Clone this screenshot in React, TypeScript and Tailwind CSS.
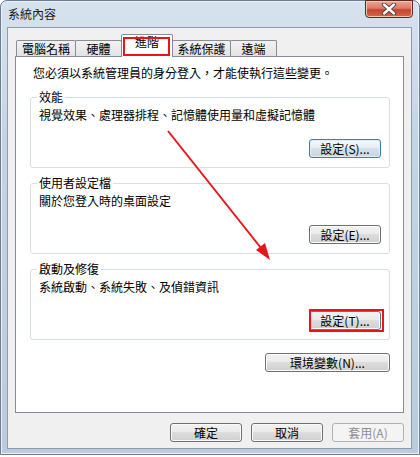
import React from "react";

type BtnVariant = "normal" | "focus" | "disabled";

const btnStyles: Record<BtnVariant, string> = {
  normal:
    "border-[#707070] bg-[linear-gradient(#f2f2f2_0%,#ebebeb_45%,#dddddd_50%,#cfcfcf_100%)] shadow-[inset_0_0_0_1px_#fbfbfb] text-black",
  focus:
    "border-[#3c7fb1] bg-[linear-gradient(#f4f9fc_0%,#e6eef4_45%,#d6e0e8_50%,#c9d6e0_100%)] shadow-[inset_0_0_0_1px_#d8eefb] text-black",
  disabled: "border-[#adb2b5] bg-[#f4f4f4] text-[#8d8d8d]",
};

const WinButton: React.FC<{
  children: React.ReactNode;
  variant?: BtnVariant;
  className?: string;
}> = ({ children, variant = "normal", className = "" }) => {
  return (
    <button
      className={`h-[19px] rounded-[3px] border text-[12px] leading-[15px] flex items-center justify-center ${btnStyles[variant]} ${className}`}
    >
      {children}
    </button>
  );
};

const Group: React.FC<{
  title: string;
  desc: string;
  button: string;
  variant?: BtnVariant;
}> = ({ title, desc, button, variant = "normal" }) => {
  return (
    <fieldset className="h-[79px] border border-[#d5dfe5] rounded-[3px] pl-[6px] pr-[8px]">
      <legend className="px-[2px] leading-[16px] text-black">{title}</legend>
      <p className="pt-[2px] pl-[2px] leading-[16px]">{desc}</p>
      <div className="flex justify-end mt-[16px]">
        <WinButton variant={variant} className="w-[72px]">
          {button}
        </WinButton>
      </div>
    </fieldset>
  );
};

const tabs = [
  { label: "電腦名稱", w: "w-[60px]" },
  { label: "硬體", w: "w-[47px]" },
  { label: "進階", w: "w-[52px]", active: true },
  { label: "系統保護", w: "w-[59px]" },
  { label: "遠端", w: "w-[47px]" },
];

export default function App() {
  return (
    <div className="relative w-[420px] h-[457px] bg-white font-[family-name:'Noto_Sans_CJK_TC',sans-serif] text-[12px] text-black">
      <div className="w-[420px] h-[455px] rounded-t-[7px] border border-[#6b7d93] bg-[linear-gradient(180deg,#d6e2ee_0%,#c5d4e5_30%,#bccbdc_100%)] shadow-[inset_0_0_0_1px_#e9f0f8] flex flex-col">
        {/* title bar */}
        <div className="h-[27px] flex justify-between items-start pl-[7px] pr-[6px]">
          <span className="pt-[5px] leading-[16px] text-[#1b1b1b]">系統內容</span>
          <div className="w-[48px] h-[18px] -mt-px rounded-b-[4px] border border-[#5a2a22] bg-[linear-gradient(180deg,#eba896_0%,#dc7a66_45%,#c9442d_55%,#d5674c_100%)] shadow-[inset_0_0_0_1px_#f2c3b6] flex items-center justify-center">
            <svg width="16" height="12" viewBox="0 0 16 12">
              <path d="M3 1.5 L13 10.5 M13 1.5 L3 10.5" stroke="#3d3d3d" strokeWidth="4.2" strokeLinecap="round" />
              <path d="M3 1.5 L13 10.5 M13 1.5 L3 10.5" stroke="#ffffff" strokeWidth="2.4" strokeLinecap="round" />
            </svg>
          </div>
        </div>

        {/* client area */}
        <div className="ml-[7px] w-[403px] h-[420px] bg-[#f0f0f0] shadow-[0_0_0_1px_#8c9db2] flex flex-col">
          <div className="h-[28px] flex items-end pl-[8px]">
            {tabs.map((t, i) =>
              t.active ? (
                <div
                  key={t.label}
                  className={`${t.w} relative z-10 -ml-px -mb-px h-[23px] border border-b-0 border-[#898c95] rounded-t-[2px] bg-white flex justify-center pt-[1px] leading-[12px]`}
                >
                  {t.label}
                </div>
              ) : (
                <div
                  key={t.label}
                  className={`${t.w} ${i > 0 ? "-ml-px" : ""} h-[16px] border border-b-0 border-[#898c95] rounded-t-[2px] bg-[linear-gradient(#f2f2f2,#e3e3e3)] flex items-center justify-center leading-[15px]`}
                >
                  {t.label}
                </div>
              )
            )}
          </div>

          <div className="ml-[7px] w-[389px] h-[357px] border border-[#898c95] bg-white pt-[8px] pl-[14px] pr-[13px] flex flex-col">
            <p className="pl-[3px] leading-[16px]">您必須以系統管理員的身分登入，才能使執行這些變更。</p>
            <div className="mt-[8px] flex flex-col gap-[7px]">
              <Group
                title="效能"
                desc="視覺效果、處理器排程、記憶體使用量和虛擬記憶體"
                button="設定(S)..."
                variant="focus"
              />
              <Group title="使用者設定檔" desc="關於您登入時的桌面設定" button="設定(E)..." />
              <Group title="啟動及修復" desc="系統啟動、系統失敗、及偵錯資訊" button="設定(T)..." />
            </div>
            <div className="flex justify-end mt-[13px]">
              <WinButton className="w-[125px]">環境變數(N)...</WinButton>
            </div>
          </div>

          <div className="mt-[10px] flex justify-end gap-[9px] pr-[7px]">
            <WinButton className="w-[72px]">確定</WinButton>
            <WinButton className="w-[72px]">取消</WinButton>
            <WinButton variant="disabled" className="w-[72px]">
              套用(A)
            </WinButton>
          </div>
        </div>
      </div>

      {/* red annotations drawn over the screenshot */}
      <svg className="absolute left-0 top-0 z-20 pointer-events-none" width="420" height="457" viewBox="0 0 420 457">
        <rect x="124" y="38" width="45" height="17" fill="none" stroke="#e8161b" strokeWidth="2" />
        <rect x="310" y="310" width="73" height="21" fill="none" stroke="#e8161b" strokeWidth="2" />
        <line x1="168" y1="131" x2="261" y2="248" stroke="#e8161b" strokeWidth="2" />
        <polygon points="270,260 256,250 265,243" fill="#e8161b" />
      </svg>
    </div>
  );
}
